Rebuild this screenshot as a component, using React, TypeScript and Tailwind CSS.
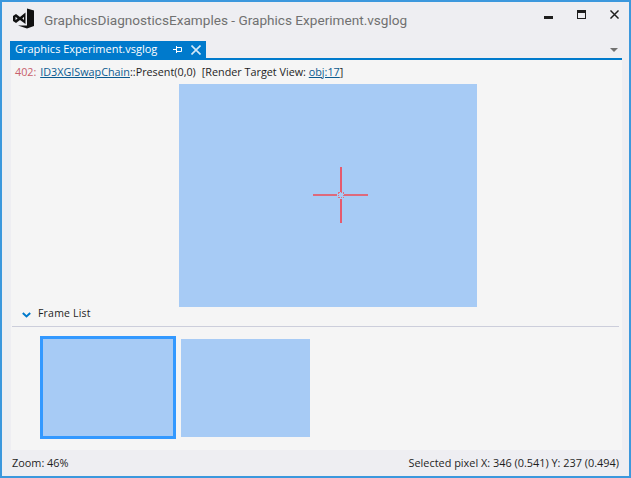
const font = { fontFamily: '"Open Sans", "Noto Sans", sans-serif' };

function VsLogo() {
  return (
    <svg width="21" height="21" viewBox="0 0 21 21" className="block">
      <path d="M14 0.5 L21 2.5 V18 L14 20.5 L5 17.5 L14 17.5 Z" fill="#111" />
      <path d="M0 8 L3 6 L7 9 L12.5 4.5 V16 L7 12 L3 15 L0 13 Z M2.5 8.8 V12 L4.6 10.4 Z M9.3 10.5 L11 12 V8.8 Z" fill="#111" fillRule="evenodd" />
    </svg>
  );
}

function PinIcon() {
  return (
    <svg width="9" height="9" viewBox="0 0 9 9" className="block">
      <path d="M0 4.5 H3 M3.5 1 V8 M3.5 2.5 H8.5 V6.5 H3.5" stroke="#fff" strokeWidth="1" fill="none" />
    </svg>
  );
}

function CloseIcon({ size, color, width }: { size: number; color: string; width: number }) {
  return (
    <svg width={size} height={size} viewBox="0 0 10 10" className="block">
      <path d="M0.5 0.5 L9.5 9.5 M9.5 0.5 L0.5 9.5" stroke={color} strokeWidth={width} fill="none" />
    </svg>
  );
}

function Crosshair() {
  return (
    <div className="absolute left-[134px] top-[83px] w-[56px] h-[56px]">
      <div className="absolute left-0 top-[27px] w-[24px] h-[2px] bg-[#de6a7c]" />
      <div className="absolute left-[31px] top-[27px] w-[24px] h-[2px] bg-[#de6a7c]" />
      <div className="absolute left-[27px] top-0 w-[2px] h-[25px] bg-[#e65a6e]" />
      <div className="absolute left-[27px] top-[32px] w-[2px] h-[24px] bg-[#e65a6e]" />
      <div className="absolute left-[25px] top-[25px] w-[6px] h-[6px] border border-dotted border-[#dd6f82]" />
    </div>
  );
}

export default function App() {
  return (
    <div className="w-[631px] h-[478px] flex flex-col border-2 border-[#3c98dd] bg-[#eeeef2] text-[#1e1e1e] overflow-hidden" style={font}>
      <div className="flex items-start h-[39px] shrink-0">
        <div className="ml-[11px] mt-[6px] w-[31px]">
          <VsLogo />
        </div>
        <div className="mt-[8px] text-[13.6px] leading-5 text-[#717171] whitespace-nowrap font-['Roboto']">
          GraphicsDiagnosticsExamples - Graphics Experiment.vsglog
        </div>
        <div className="ml-auto mr-[10px] mt-[8px] flex items-start gap-[24px]">
          <div className="mt-[6px] w-[9px] h-[3px] bg-[#1e1e1e]" />
          <div className="w-[9px] h-[9px] border border-[#1e1e1e] border-t-[3px]" />
          <CloseIcon size={9} color="#1e1e1e" width={1.6} />
        </div>
      </div>

      <div className="flex items-center h-[17px] shrink-0 ml-[8px] mr-[7px]">
        <div className="flex items-center h-full w-[196px] bg-[#007acc] text-white text-[11px] pl-[5px] whitespace-nowrap">
          <span className="w-[158px]">Graphics Experiment.vsglog</span>
          <PinIcon />
          <div className="ml-[9px]">
            <CloseIcon size={10} color="#d3e9f8" width={1.6} />
          </div>
        </div>
        <div className="ml-auto mr-[4px] w-0 h-0 border-x-[4px] border-x-transparent border-t-[4px] border-t-[#717171]" />
      </div>

      <div className="flex flex-col h-[392px] shrink-0 ml-[8px] mr-[7px] border-t-2 border-t-[#007acc]">
        <div className="flex flex-col flex-1 ml-[1px] bg-[#f5f5f5]">
          <div className="h-[24px] pl-[4px] pt-[4px] text-[10.8px] leading-4 whitespace-nowrap">
            <span className="text-[#c8606c] mr-[1px]">402: </span>
            <span className="text-[#0a5a90] underline">ID3XGISwapChain</span>
            <span>::Present(0,0)</span>
            <span className="ml-[6px]">[Render Target View: </span>
            <span className="text-[#0a5a90] underline">obj:17</span>
            <span>]</span>
          </div>
          <div className="relative ml-[168px] w-[298px] h-[223px] bg-[#a7cbf5]">
            <Crosshair />
          </div>
          <div className="flex items-center h-[20px] ml-[1px] mr-[3px] pl-[10px] pb-[6px] border-b border-b-[#cccedb]">
            <svg width="9" height="6" viewBox="0 0 9 6" className="block mt-[2px]">
              <path d="M0.8 1 L4.5 4.4 L8.2 1" stroke="#007acc" strokeWidth="2" fill="none" />
            </svg>
            <span className="ml-[7px] text-[10.5px] tracking-[0.2px]">Frame List</span>
          </div>
          <div className="flex items-center ml-[29px] mt-[9px] gap-[5px]">
            <div className="w-[136px] h-[103px] bg-[#a7cbf5] border-[3px] border-[#3399ff]" />
            <div className="w-[129px] h-[98px] bg-[#a7cbf5]" />
          </div>
        </div>
      </div>

      <div className="flex items-center justify-between flex-1 pl-[10px] pr-[10px] text-[10.9px] whitespace-nowrap">
        <span>Zoom: 46%</span>
        <span>Selected pixel X: 346 (0.541) Y: 237 (0.494)</span>
      </div>
    </div>
  );
}
